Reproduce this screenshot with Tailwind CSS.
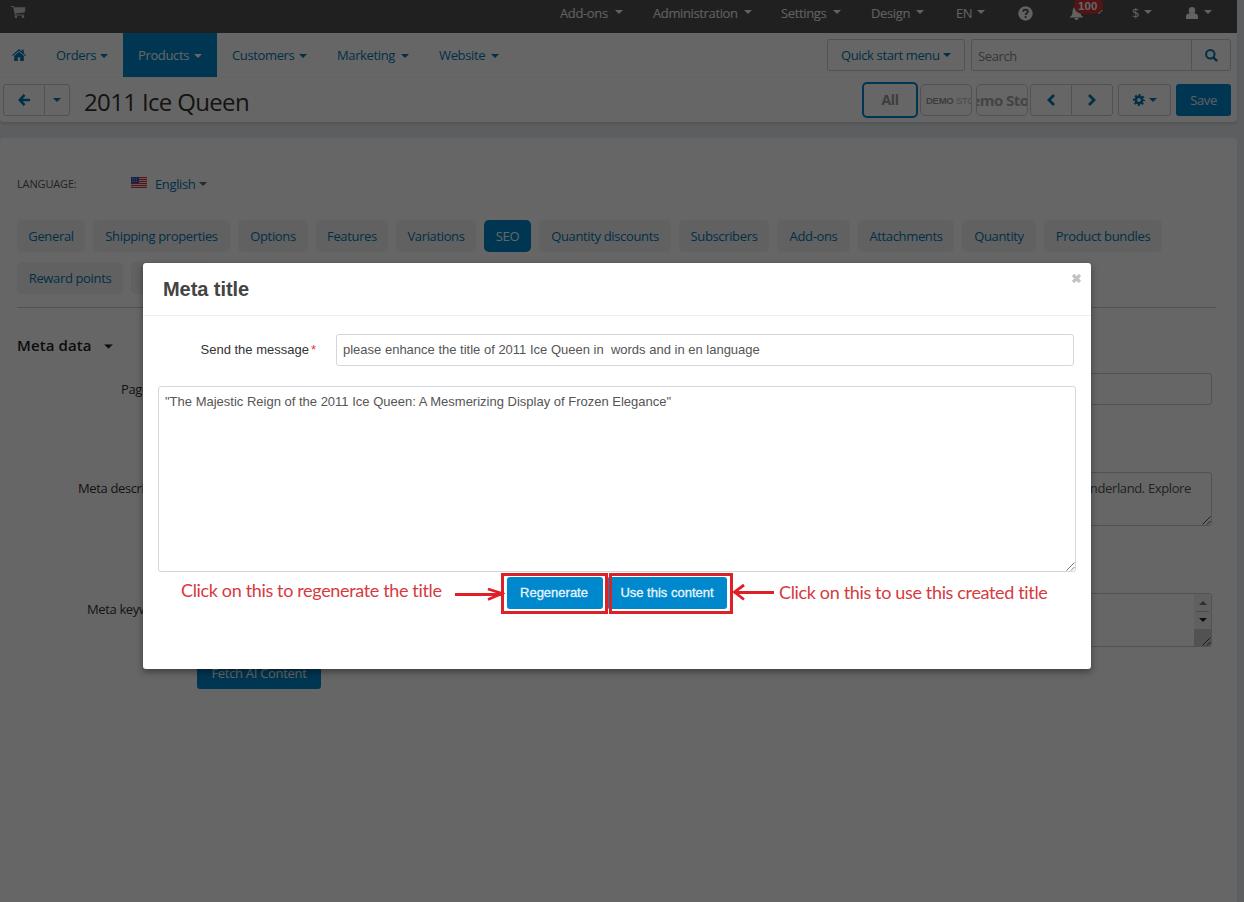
<!DOCTYPE html>
<html lang="en">
<head>
    <meta charset="UTF-8">
    <meta name="viewport" content="width=device-width, initial-scale=1.0">
    <title>2011 Ice Queen</title>
    <script src="https://cdn.jsdelivr.net/npm/@tailwindcss/browser@4"></script>
</head>
<body class="relative h-[902px] w-[1244px] overflow-hidden bg-[#e8ebee] font-['Open_Sans','Noto_Sans',sans-serif] text-[13px] leading-5 tracking-[-0.37px] text-[#333]">
    <!-- shared symbols -->
    <svg class="hidden">
        <symbol id="caret" viewBox="0 0 8 4"><path d="M0 0h8L4 4z" fill="currentColor"/></symbol>
        <symbol id="grip" viewBox="0 0 9 9"><path d="M.5 8.500l8-8M5 8.500L8.500 5" stroke="currentColor" stroke-width=".8" fill="none"/></symbol>
    </svg>

    <div class="h-full w-[1237px]">
        <!-- top bar -->
        <div class="flex h-[33px] items-start bg-[#525252] pt-[3px] text-[#f4f4f4]">
            <svg class="mt-[3px] ml-[11px] h-3 w-[15px] text-[#ccc]" viewBox="0 0 15 12" fill="currentColor"><path d="M0 0h2.800l.5 1.200H14.500L13.700 6.500 4.600 7.600l.2.800H13V9.500H3.900L2.200 1H0z"/><circle cx="5" cy="10.700" r="1.300"/><circle cx="12" cy="10.700" r="1.300"/></svg>
            <div class="ml-[534px] flex w-[93px] whitespace-nowrap"><span class="w-[55px]">Add-ons</span><svg class="mt-[7px] h-1 w-2"><use href="#caret"/></svg></div>
            <div class="flex w-[128px] whitespace-nowrap"><span class="w-[91px]">Administration</span><svg class="mt-[7px] h-1 w-2"><use href="#caret"/></svg></div>
            <div class="flex w-[90px] whitespace-nowrap"><span class="w-[52px]">Settings</span><svg class="mt-[7px] h-1 w-2"><use href="#caret"/></svg></div>
            <div class="flex w-[85px] whitespace-nowrap"><span class="w-[45px]">Design</span><svg class="mt-[7px] h-1 w-2"><use href="#caret"/></svg></div>
            <div class="flex w-[62px] whitespace-nowrap"><span class="w-[21px]">EN</span><svg class="mt-[7px] h-1 w-2"><use href="#caret"/></svg></div>
            <svg class="mt-[3px] h-[15px] w-[15px]" viewBox="0 0 15 15"><circle cx="7.500" cy="7.500" r="7.200" fill="currentColor"/><path d="M5.200 5.800C5.200 2.900 9.900 3 9.900 5.600 9.900 7.300 7.600 7.200 7.600 9" fill="none" stroke="#525252" stroke-width="1.900"/><path d="M6.600 10.200h2v1.800h-2z" fill="#525252"/></svg>
            <div class="relative ml-9 flex w-[63px]">
                <svg class="mt-[3px] h-[15px] w-[15px]" viewBox="0 0 15 14"><path d="M7.500 0c3 .5 4 2.500 4 5.500 0 2.500 1 4 3 5.500H.5c2-1.500 3-3 3-5.500C3.500 2.500 4.500.5 7.500 0zM5.500 11.500h4c0 2.500-4 2.500-4 0z" fill="currentColor"/></svg>
                <svg class="mt-[7px] ml-[11px] h-1 w-2"><use href="#caret"/></svg>
                <span class="absolute -top-[6px] left-[5px] h-[17px] w-[29px] rounded-full bg-[#c33] pl-[4px] font-['Liberation_Sans',sans-serif] text-[11.500px] leading-[19px] font-bold tracking-[0.1px] text-white">100</span>
            </div>
            <div class="flex w-[54px]"><span class="w-[12px]">$</span><svg class="mt-[7px] h-1 w-2"><use href="#caret"/></svg></div>
            <svg class="mt-[4px] h-3 w-3" viewBox="0 0 12 12" fill="currentColor"><path d="M6 0c4.200 0 3.600 5.200 2.200 6.200C10.800 6.800 12 7.500 12 9.400V12H0V9.400c0-1.900 1.200-2.600 3.800-3.200C2.400 5.200 1.800 0 6 0z"/></svg>
            <svg class="mt-[7px] ml-1.5 h-1 w-2"><use href="#caret"/></svg>
        </div>

        <!-- navigation and title -->
        <div class="h-[89px] rounded-b bg-white shadow-[0_2px_3px_rgba(0,0,0,0.12)]">
            <div class="flex h-[44px] text-[#0077b5]">
                <svg class="mt-4 ml-[12px] h-[12px] w-[14px]" viewBox="0 0 14 12" fill="currentColor"><path d="M7 0l2.700 2.400V.8h2v3.400L14 6.300l-.8.800L7 1.700.8 7.100 0 6.300z"/><path d="M7 2.800l4.800 4.100V12H8.200V8.300H5.800V12H2.200V6.900z"/></svg>
                <div class="ml-[30px] flex w-[67px] pt-3"><span class="w-[44px]">Orders</span><svg class="mt-[9px] h-1 w-2"><use href="#caret"/></svg></div>
                <div class="flex w-[94px] bg-[#08c] pt-3 pl-[15px] text-white"><span class="w-[56px]">Products</span><svg class="mt-[9px] h-1 w-2"><use href="#caret"/></svg></div>
                <div class="ml-[15px] flex w-[105px] pt-3"><span class="w-[67px]">Customers</span><svg class="mt-[9px] h-1 w-2"><use href="#caret"/></svg></div>
                <div class="flex w-[102px] pt-3"><span class="w-[64px]">Marketing</span><svg class="mt-[9px] h-1 w-2"><use href="#caret"/></svg></div>
                <div class="flex w-[388px] pt-3"><span class="w-[52px]">Website</span><svg class="mt-[9px] h-1 w-2"><use href="#caret"/></svg></div>
                <div class="mt-[6px] flex h-8 w-[138px] rounded-[3px] border border-[#ccc] pt-[5px] pl-[13px] whitespace-nowrap"><span class="w-[102px]">Quick start menu</span><svg class="mt-2 h-1 w-2"><use href="#caret"/></svg></div>
                <div class="mt-[6px] ml-[6px] flex h-8 w-[260px] rounded-[3px] border border-[#ccc]">
                    <div class="w-[220px] border-r border-[#ccc] pt-[6px] pl-[6px] text-[#888]">Search</div>
                    <svg class="mt-[9px] ml-[13px] h-[13px] w-[13px]" viewBox="0 0 13 13" fill="none" stroke="currentColor"><circle cx="5.300" cy="5.300" r="4.200" stroke-width="2"/><path d="M8.500 8.500l3.600 3.600" stroke-width="2.400"/></svg>
                </div>
            </div>
            <div class="flex h-[45px] border-t border-[#f8f8f8] pt-[6px] text-[#0077b5]">
                <div class="ml-[3px] flex h-8 w-[67px] rounded-[3px] border border-[#ccc]">
                    <div class="flex w-[41px] items-center border-r border-[#ccc] pl-[14px]"><svg class="h-3 w-3" viewBox="0 0 12 12" fill="none" stroke="currentColor" stroke-width="2.600"><path d="M6.500.9L1.900 6l4.600 5.100M2 6h10"/></svg></div>
                    <svg class="mt-[13px] ml-[8px] h-1 w-2"><use href="#caret"/></svg>
                </div>
                <h1 class="ml-[14px] w-[778px] text-[24px] leading-[35px] tracking-[-0.65px] text-[#333]">2011 Ice Queen</h1>
                <div class="-mt-[2px] h-9 w-[56px] rounded-[5px] border-2 border-[#08c] text-center text-[14px] leading-8 font-bold text-[#999]">All</div>
                <div class="ml-[2px] h-8 w-[52px] overflow-hidden rounded-[5px] border border-[#ccc] pl-[5px] font-['Liberation_Sans',sans-serif] text-[9.500px] leading-[31px] tracking-[-0.25px] whitespace-nowrap text-[#bbb]"><b class="text-[#999]">DEMO</b> STORE</div>
                <div class="ml-[4px] flex h-8 w-[52px] justify-center overflow-hidden rounded-[5px] border border-[#ccc] text-[15px] leading-[30px] font-bold tracking-[-0.5px] whitespace-nowrap text-[#aaa]"><span>Demo Store</span></div>
                <div class="ml-[2px] flex h-8 w-[83px] items-center rounded-[3px] border border-[#ccc]">
                    <div class="flex h-full w-[41px] items-center border-r border-[#ccc] pl-[16px]"><svg class="h-3 w-2" viewBox="0 0 8 12" fill="none" stroke="currentColor" stroke-width="2.800"><path d="M7 1L2 6l5 5"/></svg></div>
                    <svg class="ml-[16px] h-3 w-2" viewBox="0 0 8 12" fill="none" stroke="currentColor" stroke-width="2.800"><path d="M1 1l5 5-5 5"/></svg>
                </div>
                <div class="ml-[5px] flex h-8 w-[53px] items-center rounded-[3px] border border-[#ccc] pl-[14px]">
                    <svg class="h-3 w-3" viewBox="-6 -6 12 12"><circle r="3.200" fill="none" stroke="currentColor" stroke-width="2.600"/><circle r="5" fill="none" stroke="currentColor" stroke-width="2" stroke-dasharray="2 1.927" stroke-dashoffset="1"/></svg>
                    <svg class="ml-1 h-1 w-2"><use href="#caret"/></svg>
                </div>
                <div class="ml-[5px] h-8 w-[55px] rounded-[3px] bg-[#08c] text-center leading-8 text-[#eee]">Save</div>
            </div>
        </div>

        <!-- page content -->
        <div class="mt-4 h-[764px] rounded-t bg-white pl-[17px]">
            <div class="flex pt-[36px] leading-5">
                <span class="w-[114px] text-[11px] font-medium tracking-[-0.15px] text-[#555]">LANGUAGE:</span>
                <svg class="mt-[3px] h-[11px] w-4" viewBox="0 0 16 11"><path d="M0 0h16v11H0z" fill="#f2dede"/><path d="M0 .5h16M0 2.500h16M0 4.500h16M0 6.500h16M0 8.500h16M0 10.500h16" stroke="#d33"/><path d="M0 0h8v6H0z" fill="#2b55c4"/><path d="M1 1.500h6M1 3h6M1 4.500h6" stroke="#cdf" stroke-width=".5" stroke-dasharray="1 1"/></svg>
                <span class="ml-[8px] w-[44px] text-[#0077b5]">English</span>
                <svg class="mt-2 h-1 w-2 text-[#666]"><use href="#caret"/></svg>
            </div>
            <div class="mt-[26px] flex flex-wrap gap-x-2 gap-y-[10px] text-center leading-8 tracking-[-0.35px] whitespace-nowrap text-[#0077b5] *:h-8 *:rounded-[5px] *:bg-[#f5f2f2]">
                <div class="w-[68px]">General</div>
                <div class="w-[137px]">Shipping properties</div>
                <div class="w-[70px]">Options</div>
                <div class="w-[72px]">Features</div>
                <div class="w-[80px]">Variations</div>
                <div class="w-[47px] bg-[#08c]! text-white">SEO</div>
                <div class="w-[132px]">Quantity discounts</div>
                <div class="w-[90px]">Subscribers</div>
                <div class="w-[73px]">Add-ons</div>
                <div class="w-[96px]">Attachments</div>
                <div class="w-[74px]">Quantity</div>
                <div class="w-[118px]">Product bundles</div>
                <div class="w-[106px]">Reward points</div>
                <div class="w-[80px]">Reviews</div>
            </div>
            <div class="mt-[13px] w-[1199px] border-t border-[#ccc]"></div>
            <div class="flex pt-[26px] text-[15px] leading-[22px] font-semibold tracking-[0.1px] text-[#222]">
                <span class="w-[87px]">Meta data</span><svg class="mt-[10px] h-[5px] w-[9px]" viewBox="0 0 8 4"><use href="#caret"/></svg>
            </div>
            <div class="mt-[17px] flex h-[99px] leading-8">
                <label class="w-[180px] pl-[104px]">Page title:</label>
                <div class="h-8 w-[1015px] rounded-[3px] border border-[#ccc]"></div>
            </div>
            <div class="flex h-[121px] leading-8">
                <label class="w-[180px] pl-[61px]">Meta description:</label>
                <div class="relative h-[54px] w-[1015px] rounded-[3px] border border-[#ccc] pr-5 text-right leading-[30px] text-[#555]">nderland. Explore
                    <svg class="absolute right-0 bottom-0 h-[9px] w-[9px] text-[#222]"><use href="#grip"/></svg>
                </div>
            </div>
            <div class="flex h-[64px] leading-8">
                <label class="w-[180px] pl-[70px]">Meta keywords:</label>
                <div class="relative flex h-[54px] w-[1015px] justify-end rounded-[3px] border border-[#ccc]">
                    <div class="flex h-full w-[17px] flex-col items-center bg-[#f1f1f1]">
                        <svg class="mt-[7px] h-1 w-2 rotate-180 text-[#777]"><use href="#caret"/></svg>
                        <div class="mt-[6px] w-[13px] border-t border-[#bbb]"></div>
                        <svg class="mt-[6px] h-1 w-2 text-[#222]"><use href="#caret"/></svg>
                        <div class="mt-auto h-[17px] w-full bg-[#ccc]"></div>
                    </div>
                    <svg class="absolute right-0 bottom-0 h-[9px] w-[9px] text-[#222]"><use href="#grip"/></svg>
                </div>
            </div>
            <button class="ml-[180px] block h-8 w-[124px] rounded-[3px] bg-[#08c] tracking-[-0.3px] text-white">Fetch AI Content</button>
        </div>
    </div>

    <!-- modal -->
    <div class="absolute inset-0 bg-black/60 pt-[263px] pl-[143px] font-['Liberation_Sans',Arial,sans-serif] tracking-normal">
        <div class="relative h-[406px] w-[948px] rounded-[3px] bg-white shadow-[0_3px_7px_rgba(0,0,0,0.4)]">
            <div class="flex h-[53px] justify-between border-b border-[#eee] pr-[9px] pl-5">
                <h2 class="pt-[11px] text-[20px] leading-[30px] font-bold tracking-[-0.05px] text-[#444]">Meta title</h2>
                <svg class="mt-[10px] h-[11px] w-[11px]" viewBox="0 0 11 11"><path d="M2 2l7 7M9 2l-7 7" stroke="#c4c4c4" stroke-width="3.200"/></svg>
            </div>
            <div class="flex pt-[18px]">
                <label class="w-[193px] pl-[57.500px] leading-8">Send the message<span class="ml-[2px] text-[#e33]">*</span></label>
                <div class="h-8 w-[738px] rounded-[3px] border border-[#d3d7dc] pl-[6px] leading-[30px] whitespace-pre text-[#555]">please enhance the title of 2011 Ice Queen in  words and in en language</div>
            </div>
            <div class="relative mt-5 ml-[15px] h-[186px] w-[918px] rounded-[3px] border border-[#d3d7dc] px-[6px] pt-[5px] text-[#555]">"The Majestic Reign of the 2011 Ice Queen: A Mesmerizing Display of Frozen Elegance"
                <svg class="absolute right-0 bottom-0 h-[9px] w-[9px]"><use href="#grip"/></svg>
            </div>
            <div class="mt-[5px] ml-[364px] flex gap-1 text-[#e6f5ff]">
                <button class="h-8 w-[96px] rounded-[3px] bg-[#08c] pr-[2px] [-webkit-text-stroke:0.3px]">Regenerate</button>
                <button class="h-8 w-[120px] rounded-[3px] bg-[#08c] [-webkit-text-stroke:0.3px]">Use this content</button>
            </div>

            <!-- callouts -->
            <div class="absolute top-[310px] left-[358px] h-[41px] w-[107px] border-3 border-[#dc2129]"></div>
            <div class="absolute top-[310px] left-[466px] h-[41px] w-[124px] border-3 border-[#dc2129]"></div>
            <svg class="absolute top-[321px] left-[312px] h-[20px] w-[50px]" viewBox="0 0 50 20" fill="none" stroke="#e01f27"><path d="M0 10.500h47" stroke-width="3"/><path d="M33 5l14 4.500-14 6" stroke-width="2.800"/></svg>
            <svg class="absolute top-[319px] left-[588px] h-[20px] w-[43px]" viewBox="0 0 43 20" fill="none" stroke="#e01f27"><path d="M3 10.500h40" stroke-width="3"/><path d="M13 3L3.500 10l9.500 7.500" stroke-width="2.800"/></svg>
            <div class="absolute top-[315px] left-[38px] font-[Lato,sans-serif] text-[18px] leading-6 tracking-[-0.35px] whitespace-nowrap text-[#d63a3f]">Click on this to regenerate the title</div>
            <div class="absolute top-[317px] left-[636px] font-[Lato,sans-serif] text-[18px] leading-6 tracking-[-0.35px] whitespace-nowrap text-[#d63a3f]">Click on this to use this created title</div>
        </div>
    </div>
</body>
</html>
